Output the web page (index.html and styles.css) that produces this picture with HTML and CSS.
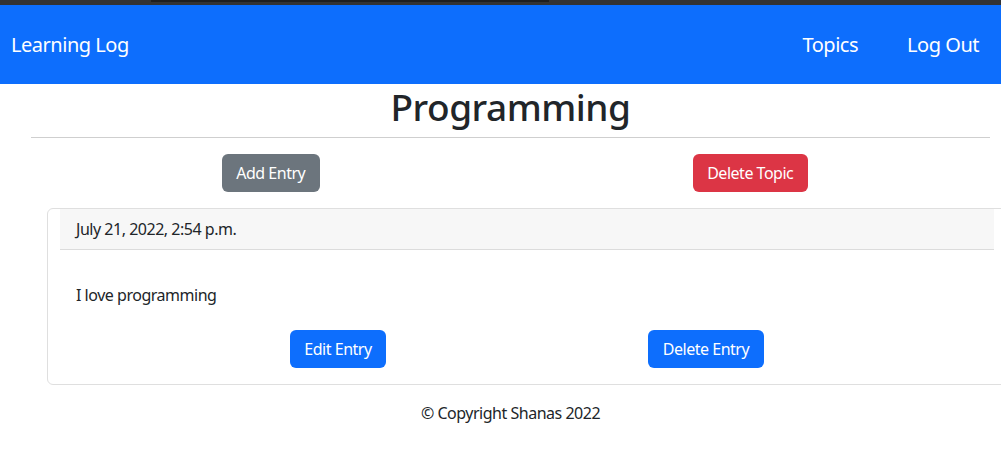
FILE: index.html
```html
<!DOCTYPE html>
<html lang="en">
<head>
<meta charset="utf-8">
<title>Learning Log</title>
<link rel="stylesheet" href="styles.css">
</head>
<body>
<div class="chrome"><div class="chrome-tab"></div></div>
<nav class="navbar">
  <a class="brand" href="#">Learning Log</a>
  <div class="nav-links">
    <a class="nav-link" href="#">Topics</a>
    <a class="nav-link" href="#">Log Out</a>
  </div>
</nav>
<main class="page">
  <div class="header-block">
    <h1 class="title">Programming</h1>
    <hr class="rule">
    <div class="actions">
      <div class="action-col"><a class="btn btn-secondary" href="#">Add Entry</a></div>
      <div class="action-col"><a class="btn btn-danger" href="#">Delete Topic</a></div>
    </div>
  </div>
  <div class="card">
    <div class="card-header">July 21, 2022, 2:54 p.m.</div>
    <div class="card-body">
      <p class="entry-text">I love programming</p>
      <div class="entry-actions">
        <div class="action-col"><a class="btn btn-primary" href="#">Edit Entry</a></div>
        <div class="action-col"><a class="btn btn-primary" href="#">Delete Entry</a></div>
      </div>
    </div>
  </div>
  <footer class="footer">© Copyright Shanas 2022</footer>
</main>
</body>
</html>
```

FILE: styles.css
```css
* { box-sizing: border-box; }
html, body { margin: 0; padding: 0; }
body {
  font-family: "Noto Sans", "Open Sans", sans-serif;
  font-size: 16px;
  letter-spacing: -0.03em;
  color: #212529;
  background: #fff;
  width: 1001px;
  overflow: hidden;
}
.chrome {
  height: 5px;
  background: #333333;
  display: flex;
  padding-left: 151px;
}
.chrome-tab {
  width: 398px;
  height: 2px;
  background: #1f1f1f;
}
.navbar {
  height: 79px;
  background: #0d6efd;
  display: flex;
  align-items: center;
  justify-content: space-between;
  padding: 0 22px 0 11px;
}
.brand, .nav-link {
  color: #fff;
  text-decoration: none;
  font-size: 20px;
}
.nav-links {
  display: flex;
  gap: 49px;
}
.page {
  padding: 0;
}
.header-block {
  margin: 0 11px 0 31px;
}
.title {
  margin: 0;
  padding-top: 1px;
  text-align: center;
  font-size: 37px;
  font-weight: 500;
  line-height: 44px;
}
.rule {
  margin: 8px 0 16px;
  border: 0;
  border-top: 1px solid #cfcfcf;
}
.actions {
  display: grid;
  grid-template-columns: 1fr 1fr;
}
.action-col {
  display: flex;
  justify-content: center;
}
.btn {
  display: inline-block;
  height: 38px;
  line-height: 24px;
  padding: 6px 13.5px;
  border-radius: 6px;
  color: #fff;
  text-decoration: none;
  font-size: 16px;
  border: 1px solid transparent;
}
.btn-secondary { background: #6c757d; }
.btn-danger { background: #dc3545; }
.btn-primary { background: #0d6efd; }
.card {
  margin: 16px 0 0 47px;
  width: 980px;
  border: 1px solid #dfdfdf;
  border-radius: 6px;
  padding: 0 0 16px 12px;
}
.card-header {
  width: 934px;
  height: 41px;
  background: #f7f7f7;
  border-bottom: 1px solid #dcdcdc;
  padding: 0 16px;
  display: flex;
  align-items: center;
}
.card-body {
  padding: 0 0 0 16px;
}
.entry-text {
  margin: 33px 0 23px;
  line-height: 24px;
}
.entry-actions {
  display: grid;
  grid-template-columns: 368px 368px;
  margin-left: 78px;
}
.footer {
  text-align: center;
  padding: 16px 0 0 20px;
  line-height: 24px;
}
```
